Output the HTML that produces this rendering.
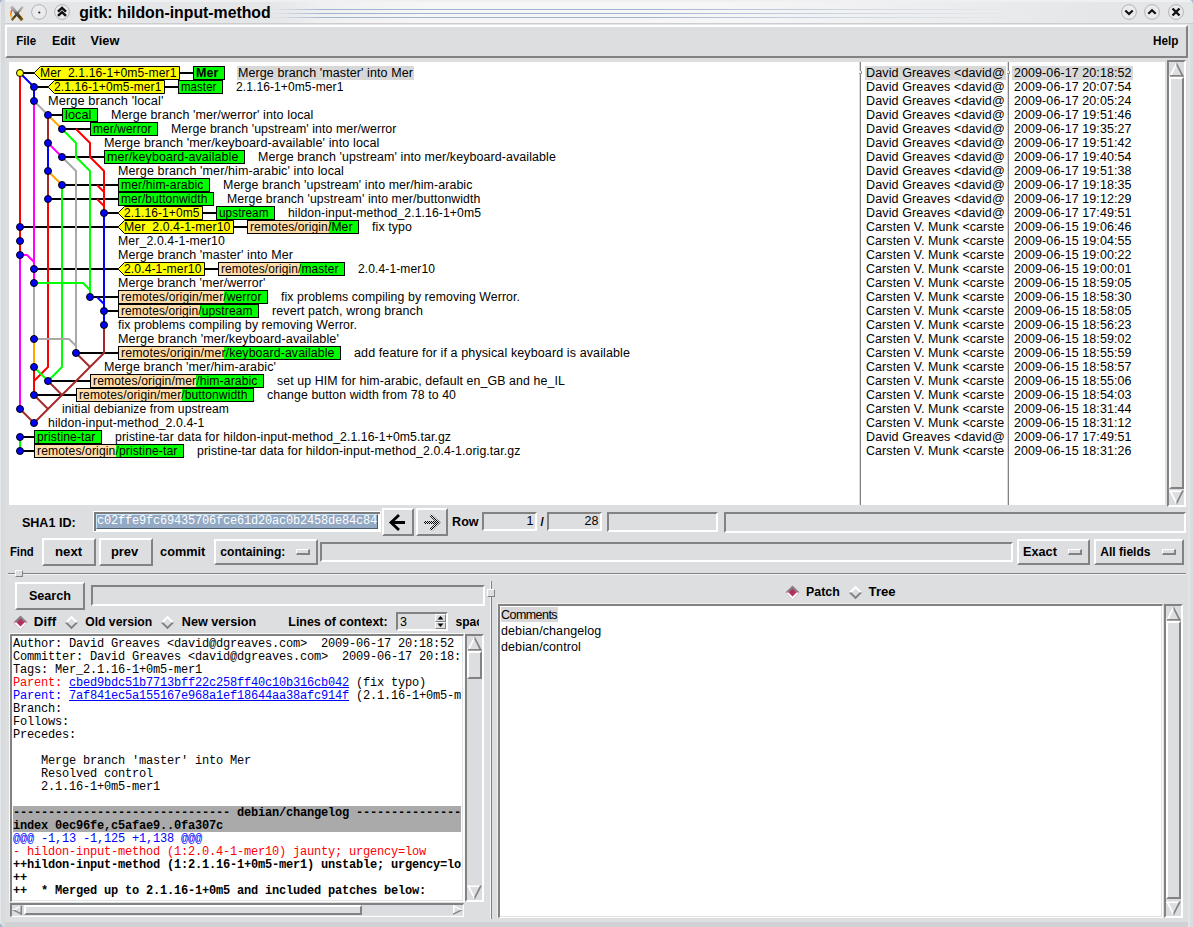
<!DOCTYPE html>
<html><head><meta charset="utf-8"><title>gitk: hildon-input-method</title>
<style>
html,body{margin:0;padding:0}
body{width:1193px;height:927px;overflow:hidden;background:#dddee0;position:relative;font-family:"Liberation Sans",sans-serif}
.rs{position:absolute;box-sizing:border-box;border:2px solid;border-color:#ffffff #828282 #828282 #ffffff;background:#dddee0}
.sk{position:absolute;box-sizing:border-box;border:2px solid;border-width:2px 1px 1px 2px;border-color:#828282 #ffffff #ffffff #828282;background:#dddee0}
.sk2{position:absolute;box-sizing:border-box;border:2px solid;border-color:#828282 #ffffff #ffffff #828282;background:#dddee0}
.sk::after{content:"";position:absolute;left:0;top:0;right:0;bottom:0;border-right:1px solid #e2e3e5;border-bottom:1px solid #e2e3e5;pointer-events:none}
.lb{position:absolute;font:bold 12px "Liberation Sans",sans-serif;color:#000;white-space:pre;line-height:14px}
.lbs{font:bold 12px "Liberation Sans",sans-serif;fill:#000;white-space:pre}
.lt{font:12.5px "Liberation Sans",sans-serif;letter-spacing:0.1px;fill:#000;white-space:pre}
.lt.b{font-weight:bold}
.lt2{font:12.5px "Liberation Sans",sans-serif;letter-spacing:0.1px;color:#000;white-space:pre;line-height:14px}
.lrow{position:absolute;font:12.5px "Liberation Sans",sans-serif;letter-spacing:0.1px;color:#000;white-space:pre;line-height:14px;height:14px}
.mono{font:12px "Liberation Mono",monospace;letter-spacing:-0.2px;white-space:pre}
.dl{font:12px "Liberation Mono",monospace;letter-spacing:-0.2px;white-space:pre;height:13px;line-height:15px;color:#000}
.dl.fs{background:#aaaaaa;font-weight:bold}
.dl.hk{color:#00f}
.dl.d0{color:#f00}
.dl.b{font-weight:bold}
.lk{color:#00f;text-decoration:underline}
</style></head>
<body>
<div style="position:absolute;left:0;top:0;width:1193px;height:25px;background:#e5e6e8"></div>
<div style="position:absolute;left:0;top:0;width:1193px;height:2px;background:#eff0f2"></div>
<div style="position:absolute;left:272px;top:2px;width:830px;height:21px;background:linear-gradient(to right,rgba(246,246,247,0),rgba(246,246,247,.6) 6%,rgba(246,246,247,1) 18%,rgba(246,246,247,1) 55%,rgba(246,246,247,0))"></div>
<div style="position:absolute;left:272px;top:9px;width:830px;height:1px;background:linear-gradient(to right,rgba(160,180,208,0),rgba(160,180,208,1) 6%,rgba(160,180,208,1) 45%,rgba(160,180,208,0) 90%)"></div>
<div style="position:absolute;left:272px;top:13px;width:830px;height:1px;background:linear-gradient(to right,rgba(160,180,208,0),rgba(160,180,208,1) 6%,rgba(160,180,208,1) 45%,rgba(160,180,208,0) 90%)"></div>
<div style="position:absolute;left:272px;top:17px;width:830px;height:1px;background:linear-gradient(to right,rgba(160,180,208,0),rgba(160,180,208,1) 6%,rgba(160,180,208,1) 45%,rgba(160,180,208,0) 90%)"></div>
<div style="position:absolute;left:0;top:23px;width:1193px;height:1px;background:#cdcdd0"></div>
<svg style="position:absolute;left:70px;top:0;overflow:visible" width="220" height="24"><text x="9.2" y="18" style="font:bold 16.5px 'Liberation Sans',sans-serif" fill="#000" lengthAdjust="spacingAndGlyphs" textLength="191.5">gitk: hildon-input-method</text></svg>
<svg style="position:absolute;left:8px;top:4px" width="18" height="18" viewBox="8 4 18 18"><defs><linearGradient id="xg" x1="0" y1="6" x2="0" y2="21" gradientUnits="userSpaceOnUse"><stop offset="0" stop-color="#c2c2c2"/><stop offset=".35" stop-color="#8e8e8e"/><stop offset=".5" stop-color="#4a4a48"/><stop offset=".7" stop-color="#4a3812"/><stop offset="1" stop-color="#8e6e16"/></linearGradient><linearGradient id="og" x1="0" y1="9" x2="0" y2="19" gradientUnits="userSpaceOnUse"><stop offset="0" stop-color="#ff4a20"/><stop offset=".5" stop-color="#ff8a08"/><stop offset="1" stop-color="#ffe030"/></linearGradient></defs><path d="M12.6 9.2 Q9.2 13.5 12.4 18.6" stroke="url(#og)" stroke-width="1.7" fill="none"/><path d="M21.8 9.5 Q24.6 13.5 22.2 18" stroke="#ffd9a0" stroke-width="1" fill="none" opacity=".7"/><path d="M11.3 6.5 L22.2 20.3" stroke="url(#xg)" stroke-width="3.2"/><path d="M22.8 6.6 L11.8 20.3" stroke="url(#xg)" stroke-width="2.2"/></svg>
<svg style="position:absolute;left:30px;top:3px" width="18" height="18"><circle cx="9" cy="9" r="7.4" fill="#ebebed" stroke="#b4b4b8" stroke-width="1"/><circle cx="9.3" cy="9.5" r="1.1" fill="#222"/></svg>
<svg style="position:absolute;left:53px;top:3px" width="18" height="18"><circle cx="9" cy="9" r="7.4" fill="#ebebed" stroke="#b4b4b8" stroke-width="1"/><path d="M5 8.6 L9 4.9 L13 8.6 M5 12.9 L9 9.2 L13 12.9" stroke="#111" stroke-width="2.5" fill="none"/></svg>
<svg style="position:absolute;left:1120px;top:3px" width="18" height="18"><circle cx="9" cy="9" r="7.4" fill="#ebebed" stroke="#b4b4b8" stroke-width="1"/><path d="M5.3 7.5 L9 11 L12.7 7.5" stroke="#111" stroke-width="2.2" fill="none"/></svg>
<svg style="position:absolute;left:1143px;top:3px" width="18" height="18"><circle cx="9" cy="9" r="7.4" fill="#ebebed" stroke="#b4b4b8" stroke-width="1"/><path d="M5.3 10.8 L9 7.3 L12.7 10.8" stroke="#111" stroke-width="2.2" fill="none"/></svg>
<svg style="position:absolute;left:1167px;top:3px" width="18" height="18"><circle cx="9" cy="9" r="7.4" fill="#ebebed" stroke="#b4b4b8" stroke-width="1"/><path d="M5.5 5.5 L12.5 12.5 M12.5 5.5 L5.5 12.5" stroke="#111" stroke-width="2.4" fill="none"/></svg>
<div style="position:absolute;left:0;top:922px;width:1193px;height:5px;background:#d0d2d5"></div>
<div style="position:absolute;left:0;top:0;width:5px;height:927px;background:#d8dadc"></div>
<div style="position:absolute;left:0;top:0;width:1px;height:927px;background:#e4e8ec"></div>
<svg style="position:absolute;left:0;top:922px" width="5" height="5"><path d="M0 5 V1 Q1 4 4 5 Z" fill="#9fb4cc"/></svg>
<svg style="position:absolute;left:1188px;top:922px" width="5" height="5"><path d="M5 5 V1 Q4 4 1 5 Z" fill="#9fb4cc"/></svg>
<div style="position:absolute;left:1188px;top:24px;width:2px;height:903px;background:#e2e4e6"></div>
<div style="position:absolute;left:1190px;top:24px;width:3px;height:903px;background:#dadcdf"></div>
<svg style="position:absolute;left:0;top:0" width="4" height="5"><path d="M0 0 H3 Q0.5 0.5 0 4 Z" fill="#9fb4cc"/></svg>
<svg style="position:absolute;left:1189px;top:0" width="4" height="5"><path d="M4 0 H1 Q3.5 0.5 4 4 Z" fill="#9fb4cc"/></svg>
<div class="rs" style="left:5px;top:25px;width:1183px;height:33px;"></div>
<svg style="position:absolute;left:14px;top:31px;overflow:visible" width="27" height="20"><text x="2.30" y="14.00" class="lbs" lengthAdjust="spacingAndGlyphs" textLength="19.7">File</text></svg>
<svg style="position:absolute;left:50px;top:31px;overflow:visible" width="31" height="20"><text x="2.10" y="14.00" class="lbs" lengthAdjust="spacingAndGlyphs" textLength="23.2">Edit</text></svg>
<svg style="position:absolute;left:88px;top:31px;overflow:visible" width="36" height="20"><text x="2.50" y="14.00" class="lbs" lengthAdjust="spacingAndGlyphs" textLength="28.9">View</text></svg>
<svg style="position:absolute;left:1151px;top:31px;overflow:visible" width="33" height="20"><text x="2.10" y="14.00" class="lbs" lengthAdjust="spacingAndGlyphs" textLength="25.4">Help</text></svg>
<div style="position:absolute;left:9px;top:62px;width:1156px;height:443px;background:#fff;overflow:hidden"><svg style="position:absolute;left:-9px;top:-62px" width="1165" height="520" viewBox="0 0 1165 520"><rect x="237" y="66" width="177" height="14" fill="#d8d8d8"/>
<rect x="865" y="66" width="141" height="14" fill="#d8d8d8"/>
<rect x="1012" y="66" width="121" height="14" fill="#d8d8d8"/>
<line x1="20" y1="73" x2="193" y2="73" stroke="#000" stroke-width="2"/>
<line x1="34" y1="87" x2="178" y2="87" stroke="#000" stroke-width="2"/>
<line x1="48" y1="115" x2="62" y2="115" stroke="#000" stroke-width="2"/>
<line x1="62" y1="129" x2="90" y2="129" stroke="#000" stroke-width="2"/>
<line x1="62" y1="157" x2="104" y2="157" stroke="#000" stroke-width="2"/>
<line x1="62" y1="185" x2="118" y2="185" stroke="#000" stroke-width="2"/>
<line x1="48" y1="199" x2="118" y2="199" stroke="#000" stroke-width="2"/>
<line x1="104" y1="213" x2="216" y2="213" stroke="#000" stroke-width="2"/>
<line x1="20" y1="227" x2="247" y2="227" stroke="#000" stroke-width="2"/>
<line x1="34" y1="269" x2="218" y2="269" stroke="#000" stroke-width="2"/>
<line x1="90" y1="297" x2="118" y2="297" stroke="#000" stroke-width="2"/>
<line x1="104" y1="311" x2="118" y2="311" stroke="#000" stroke-width="2"/>
<line x1="76" y1="353" x2="118" y2="353" stroke="#000" stroke-width="2"/>
<line x1="48" y1="381" x2="90" y2="381" stroke="#000" stroke-width="2"/>
<line x1="34" y1="395" x2="76" y2="395" stroke="#000" stroke-width="2"/>
<line x1="20" y1="437" x2="34" y2="437" stroke="#000" stroke-width="2"/>
<line x1="20" y1="451" x2="34" y2="451" stroke="#000" stroke-width="2"/>
<polyline points="20.0,73.0 20.0,255.0" fill="none" stroke="#ff0000" stroke-width="2" stroke-linejoin="round" stroke-linecap="butt"/>
<polyline points="20.0,73.0 34.0,87.0 34.0,101.0" fill="none" stroke="#0000ff" stroke-width="2" stroke-linejoin="round" stroke-linecap="butt"/>
<polyline points="34.0,101.0 34.0,283.0" fill="none" stroke="#ff00ff" stroke-width="2" stroke-linejoin="round" stroke-linecap="butt"/>
<polyline points="34.0,101.0 48.0,115.0" fill="none" stroke="#a9a9a9" stroke-width="2" stroke-linejoin="round" stroke-linecap="butt"/>
<polyline points="48.0,115.0 48.0,143.0" fill="none" stroke="#a52a2a" stroke-width="2" stroke-linejoin="round" stroke-linecap="butt"/>
<polyline points="48.0,115.0 62.0,129.0" fill="none" stroke="#ffa500" stroke-width="2" stroke-linejoin="round" stroke-linecap="butt"/>
<polyline points="62.0,129.0 76.0,143.0 76.0,157.0 90.0,171.0 90.0,297.0" fill="none" stroke="#00ff00" stroke-width="2" stroke-linejoin="round" stroke-linecap="butt"/>
<polyline points="76.0,129.0 90.0,143.0 90.0,157.0 104.0,171.0 104.0,213.0" fill="none" stroke="#ff0000" stroke-width="2" stroke-linejoin="round" stroke-linecap="butt"/>
<polyline points="48.0,143.0 48.0,171.0" fill="none" stroke="#0000ff" stroke-width="2" stroke-linejoin="round" stroke-linecap="butt"/>
<polyline points="48.0,143.0 62.0,157.0" fill="none" stroke="#ff00ff" stroke-width="2" stroke-linejoin="round" stroke-linecap="butt"/>
<polyline points="62.0,157.0 76.0,171.0 76.0,353.0" fill="none" stroke="#a9a9a9" stroke-width="2" stroke-linejoin="round" stroke-linecap="butt"/>
<polyline points="48.0,171.0 48.0,199.0" fill="none" stroke="#a52a2a" stroke-width="2" stroke-linejoin="round" stroke-linecap="butt"/>
<polyline points="48.0,171.0 62.0,185.0" fill="none" stroke="#ffa500" stroke-width="2" stroke-linejoin="round" stroke-linecap="butt"/>
<polyline points="62.0,185.0 62.0,367.0 48.0,381.0" fill="none" stroke="#00ff00" stroke-width="2" stroke-linejoin="round" stroke-linecap="butt"/>
<polyline points="97.0,185.0 104.0,192.0" fill="none" stroke="#ff0000" stroke-width="2" stroke-linejoin="round" stroke-linecap="butt"/>
<polyline points="97.0,199.0 104.0,206.0" fill="none" stroke="#ff0000" stroke-width="2" stroke-linejoin="round" stroke-linecap="butt"/>
<polyline points="48.0,199.0 48.0,367.0 34.0,381.0" fill="none" stroke="#ff0000" stroke-width="2" stroke-linejoin="round" stroke-linecap="butt"/>
<polyline points="104.0,213.0 104.0,325.0" fill="none" stroke="#0000ff" stroke-width="2" stroke-linejoin="round" stroke-linecap="butt"/>
<polyline points="20.0,255.0 20.0,409.0" fill="none" stroke="#ff00ff" stroke-width="2" stroke-linejoin="round" stroke-linecap="butt"/>
<polyline points="20.0,255.0 27.0,255.0 34.0,262.0" fill="none" stroke="#ff00ff" stroke-width="2" stroke-linejoin="round" stroke-linecap="butt"/>
<polyline points="34.0,283.0 34.0,339.0" fill="none" stroke="#a9a9a9" stroke-width="2" stroke-linejoin="round" stroke-linecap="butt"/>
<polyline points="34.0,283.0 83.0,283.0 90.0,290.0" fill="none" stroke="#00ff00" stroke-width="2" stroke-linejoin="round" stroke-linecap="butt"/>
<polyline points="97.0,297.0 104.0,304.0" fill="none" stroke="#0000ff" stroke-width="2" stroke-linejoin="round" stroke-linecap="butt"/>
<polyline points="104.0,325.0 104.0,353.0 34.0,423.0" fill="none" stroke="#a52a2a" stroke-width="2" stroke-linejoin="round" stroke-linecap="butt"/>
<polyline points="34.0,339.0 69.0,339.0 76.0,346.0" fill="none" stroke="#a9a9a9" stroke-width="2" stroke-linejoin="round" stroke-linecap="butt"/>
<polyline points="34.0,339.0 34.0,367.0" fill="none" stroke="#ffa500" stroke-width="2" stroke-linejoin="round" stroke-linecap="butt"/>
<polyline points="76.0,353.0 90.0,367.0" fill="none" stroke="#a52a2a" stroke-width="2" stroke-linejoin="round" stroke-linecap="butt"/>
<polyline points="34.0,367.0 48.0,381.0" fill="none" stroke="#00ff00" stroke-width="2" stroke-linejoin="round" stroke-linecap="butt"/>
<polyline points="34.0,367.0 34.0,395.0" fill="none" stroke="#ff0000" stroke-width="2" stroke-linejoin="round" stroke-linecap="butt"/>
<polyline points="48.0,381.0 62.0,395.0" fill="none" stroke="#a52a2a" stroke-width="2" stroke-linejoin="round" stroke-linecap="butt"/>
<polyline points="34.0,395.0 48.0,409.0" fill="none" stroke="#a52a2a" stroke-width="2" stroke-linejoin="round" stroke-linecap="butt"/>
<polyline points="20.0,409.0 34.0,423.0" fill="none" stroke="#a52a2a" stroke-width="2" stroke-linejoin="round" stroke-linecap="butt"/>
<polyline points="20.0,437.0 20.0,451.0" fill="none" stroke="#00ff00" stroke-width="2" stroke-linejoin="round" stroke-linecap="butt"/>
<polygon points="34.5,72.5 40.5,66.5 179.5,66.5 179.5,79.5 40.5,79.5 34.5,73.5" fill="#ffff00" stroke="#000" stroke-width="1"/>
<text x="40" y="77" class="lt" lengthAdjust="spacingAndGlyphs" textLength="136.5">Mer_2.1.16-1+0m5-mer1</text>
<rect x="193.5" y="66.5" width="31" height="13" fill="#00ff00" stroke="#000" stroke-width="1"/>
<text x="196" y="77" class="lt b" lengthAdjust="spacingAndGlyphs" textLength="22.5">Mer</text>
<text x="238" y="77" class="lt" lengthAdjust="spacingAndGlyphs" textLength="175">Merge branch 'master' into Mer</text>
<polygon points="48.5,86.5 54.5,80.5 164.5,80.5 164.5,93.5 54.5,93.5 48.5,87.5" fill="#ffff00" stroke="#000" stroke-width="1"/>
<text x="54" y="91" class="lt" lengthAdjust="spacingAndGlyphs" textLength="107.5">2.1.16-1+0m5-mer1</text>
<rect x="178.5" y="80.5" width="44" height="13" fill="#00ff00" stroke="#000" stroke-width="1"/>
<text x="181" y="91" class="lt" lengthAdjust="spacingAndGlyphs" textLength="35.5">master</text>
<text x="236" y="91" class="lt" lengthAdjust="spacingAndGlyphs" textLength="107.5">2.1.16-1+0m5-mer1</text>
<text x="48" y="105" class="lt" lengthAdjust="spacingAndGlyphs" textLength="115.5">Merge branch 'local'</text>
<rect x="62.5" y="108.5" width="35" height="13" fill="#00ff00" stroke="#000" stroke-width="1"/>
<text x="65" y="119" class="lt" lengthAdjust="spacingAndGlyphs" textLength="26.5">local</text>
<text x="111" y="119" class="lt" lengthAdjust="spacingAndGlyphs" textLength="202.5">Merge branch 'mer/werror' into local</text>
<rect x="90.5" y="122.5" width="67" height="13" fill="#00ff00" stroke="#000" stroke-width="1"/>
<text x="93" y="133" class="lt" lengthAdjust="spacingAndGlyphs" textLength="58.5">mer/werror</text>
<text x="171" y="133" class="lt" lengthAdjust="spacingAndGlyphs" textLength="225.5">Merge branch 'upstream' into mer/werror</text>
<text x="104" y="147" class="lt" lengthAdjust="spacingAndGlyphs" textLength="275.5">Merge branch 'mer/keyboard-available' into local</text>
<rect x="104.5" y="150.5" width="140" height="13" fill="#00ff00" stroke="#000" stroke-width="1"/>
<text x="107" y="161" class="lt" lengthAdjust="spacingAndGlyphs" textLength="131.5">mer/keyboard-available</text>
<text x="258" y="161" class="lt" lengthAdjust="spacingAndGlyphs" textLength="298">Merge branch 'upstream' into mer/keyboard-available</text>
<text x="118" y="175" class="lt" lengthAdjust="spacingAndGlyphs" textLength="226">Merge branch 'mer/him-arabic' into local</text>
<rect x="118.5" y="178.5" width="91" height="13" fill="#00ff00" stroke="#000" stroke-width="1"/>
<text x="121" y="189" class="lt" lengthAdjust="spacingAndGlyphs" textLength="82.5">mer/him-arabic</text>
<text x="223" y="189" class="lt" lengthAdjust="spacingAndGlyphs" textLength="249.5">Merge branch 'upstream' into mer/him-arabic</text>
<rect x="118.5" y="192.5" width="95" height="13" fill="#00ff00" stroke="#000" stroke-width="1"/>
<text x="121" y="203" class="lt" lengthAdjust="spacingAndGlyphs" textLength="86.5">mer/buttonwidth</text>
<text x="227" y="203" class="lt" lengthAdjust="spacingAndGlyphs" textLength="253.5">Merge branch 'upstream' into mer/buttonwidth</text>
<polygon points="118.5,212.5 124.5,206.5 202.5,206.5 202.5,219.5 124.5,219.5 118.5,213.5" fill="#ffff00" stroke="#000" stroke-width="1"/>
<text x="124" y="217" class="lt" lengthAdjust="spacingAndGlyphs" textLength="75.5">2.1.16-1+0m5</text>
<rect x="216.5" y="206.5" width="58" height="13" fill="#00ff00" stroke="#000" stroke-width="1"/>
<text x="219" y="217" class="lt" lengthAdjust="spacingAndGlyphs" textLength="49.5">upstream</text>
<text x="288" y="217" class="lt" lengthAdjust="spacingAndGlyphs" textLength="193">hildon-input-method_2.1.16-1+0m5</text>
<polygon points="118.5,226.5 124.5,220.5 233.5,220.5 233.5,233.5 124.5,233.5 118.5,227.5" fill="#ffff00" stroke="#000" stroke-width="1"/>
<text x="124" y="231" class="lt" lengthAdjust="spacingAndGlyphs" textLength="106.5">Mer_2.0.4-1-mer10</text>
<rect x="247.5" y="220.5" width="111" height="13" fill="#00ff00" stroke="#000" stroke-width="1"/>
<rect x="248" y="221.0" width="81" height="12" fill="#ffddaa"/>
<text x="250" y="231" class="lt" lengthAdjust="spacingAndGlyphs" textLength="102.5">remotes/origin/Mer</text>
<text x="372" y="231" class="lt" lengthAdjust="spacingAndGlyphs" textLength="40">fix typo</text>
<text x="118" y="245" class="lt" lengthAdjust="spacingAndGlyphs" textLength="107">Mer_2.0.4-1-mer10</text>
<text x="118" y="259" class="lt" lengthAdjust="spacingAndGlyphs" textLength="175">Merge branch 'master' into Mer</text>
<polygon points="118.5,268.5 124.5,262.5 204.5,262.5 204.5,275.5 124.5,275.5 118.5,269.5" fill="#ffff00" stroke="#000" stroke-width="1"/>
<text x="124" y="273" class="lt" lengthAdjust="spacingAndGlyphs" textLength="77.5">2.0.4-1-mer10</text>
<rect x="218.5" y="262.5" width="126" height="13" fill="#00ff00" stroke="#000" stroke-width="1"/>
<rect x="219" y="263.0" width="81" height="12" fill="#ffddaa"/>
<text x="221" y="273" class="lt" lengthAdjust="spacingAndGlyphs" textLength="117.5">remotes/origin/master</text>
<text x="358" y="273" class="lt" lengthAdjust="spacingAndGlyphs" textLength="77">2.0.4-1-mer10</text>
<text x="118" y="287" class="lt" lengthAdjust="spacingAndGlyphs" textLength="147.5">Merge branch 'mer/werror'</text>
<rect x="118.5" y="290.5" width="149" height="13" fill="#00ff00" stroke="#000" stroke-width="1"/>
<rect x="119" y="291.0" width="105" height="12" fill="#ffddaa"/>
<text x="121" y="301" class="lt" lengthAdjust="spacingAndGlyphs" textLength="140.5">remotes/origin/mer/werror</text>
<text x="281" y="301" class="lt" lengthAdjust="spacingAndGlyphs" textLength="239">fix problems compiling by removing Werror.</text>
<rect x="118.5" y="304.5" width="140" height="13" fill="#00ff00" stroke="#000" stroke-width="1"/>
<rect x="119" y="305.0" width="81" height="12" fill="#ffddaa"/>
<text x="121" y="315" class="lt" lengthAdjust="spacingAndGlyphs" textLength="131.5">remotes/origin/upstream</text>
<text x="272" y="315" class="lt" lengthAdjust="spacingAndGlyphs" textLength="151">revert patch, wrong branch</text>
<text x="118" y="329" class="lt" lengthAdjust="spacingAndGlyphs" textLength="239">fix problems compiling by removing Werror.</text>
<text x="118" y="343" class="lt" lengthAdjust="spacingAndGlyphs" textLength="221">Merge branch 'mer/keyboard-available'</text>
<rect x="118.5" y="346.5" width="222" height="13" fill="#00ff00" stroke="#000" stroke-width="1"/>
<rect x="119" y="347.0" width="105" height="12" fill="#ffddaa"/>
<text x="121" y="357" class="lt" lengthAdjust="spacingAndGlyphs" textLength="213.5">remotes/origin/mer/keyboard-available</text>
<text x="354" y="357" class="lt" lengthAdjust="spacingAndGlyphs" textLength="276">add feature for if a physical keyboard is available</text>
<text x="104" y="371" class="lt" lengthAdjust="spacingAndGlyphs" textLength="172">Merge branch 'mer/him-arabic'</text>
<rect x="90.5" y="374.5" width="173" height="13" fill="#00ff00" stroke="#000" stroke-width="1"/>
<rect x="91" y="375.0" width="105" height="12" fill="#ffddaa"/>
<text x="93" y="385" class="lt" lengthAdjust="spacingAndGlyphs" textLength="164.5">remotes/origin/mer/him-arabic</text>
<text x="277" y="385" class="lt" lengthAdjust="spacingAndGlyphs" textLength="288">set up HIM for him-arabic, default en_GB and he_IL</text>
<rect x="76.5" y="388.5" width="177" height="13" fill="#00ff00" stroke="#000" stroke-width="1"/>
<rect x="77" y="389.0" width="105" height="12" fill="#ffddaa"/>
<text x="79" y="399" class="lt" lengthAdjust="spacingAndGlyphs" textLength="168.5">remotes/origin/mer/buttonwidth</text>
<text x="267" y="399" class="lt" lengthAdjust="spacingAndGlyphs" textLength="189">change button width from 78 to 40</text>
<text x="62" y="413" class="lt" lengthAdjust="spacingAndGlyphs" textLength="167">initial debianize from upstream</text>
<text x="48" y="427" class="lt" lengthAdjust="spacingAndGlyphs" textLength="156.5">hildon-input-method_2.0.4-1</text>
<rect x="34.5" y="430.5" width="67" height="13" fill="#00ff00" stroke="#000" stroke-width="1"/>
<text x="37" y="441" class="lt" lengthAdjust="spacingAndGlyphs" textLength="58.5">pristine-tar</text>
<text x="115" y="441" class="lt" lengthAdjust="spacingAndGlyphs" textLength="336">pristine-tar data for hildon-input-method_2.1.16-1+0m5.tar.gz</text>
<rect x="34.5" y="444.5" width="149" height="13" fill="#00ff00" stroke="#000" stroke-width="1"/>
<rect x="35" y="445.0" width="81" height="12" fill="#ffddaa"/>
<text x="37" y="455" class="lt" lengthAdjust="spacingAndGlyphs" textLength="140.5">remotes/origin/pristine-tar</text>
<text x="197" y="455" class="lt" lengthAdjust="spacingAndGlyphs" textLength="323.5">pristine-tar data for hildon-input-method_2.0.4-1.orig.tar.gz</text>
<circle cx="20" cy="73" r="3.5" fill="#ffff00" stroke="#000" stroke-width="1"/>
<circle cx="34" cy="87" r="3.5" fill="#0000ff" stroke="#000" stroke-width="1"/>
<circle cx="34" cy="101" r="3.5" fill="#0000ff" stroke="#000" stroke-width="1"/>
<circle cx="48" cy="115" r="3.5" fill="#0000ff" stroke="#000" stroke-width="1"/>
<circle cx="62" cy="129" r="3.5" fill="#0000ff" stroke="#000" stroke-width="1"/>
<circle cx="48" cy="143" r="3.5" fill="#0000ff" stroke="#000" stroke-width="1"/>
<circle cx="62" cy="157" r="3.5" fill="#0000ff" stroke="#000" stroke-width="1"/>
<circle cx="48" cy="171" r="3.5" fill="#0000ff" stroke="#000" stroke-width="1"/>
<circle cx="62" cy="185" r="3.5" fill="#0000ff" stroke="#000" stroke-width="1"/>
<circle cx="48" cy="199" r="3.5" fill="#0000ff" stroke="#000" stroke-width="1"/>
<circle cx="104" cy="213" r="3.5" fill="#0000ff" stroke="#000" stroke-width="1"/>
<circle cx="20" cy="227" r="3.5" fill="#0000ff" stroke="#000" stroke-width="1"/>
<circle cx="20" cy="241" r="3.5" fill="#0000ff" stroke="#000" stroke-width="1"/>
<circle cx="20" cy="255" r="3.5" fill="#0000ff" stroke="#000" stroke-width="1"/>
<circle cx="34" cy="269" r="3.5" fill="#0000ff" stroke="#000" stroke-width="1"/>
<circle cx="34" cy="283" r="3.5" fill="#0000ff" stroke="#000" stroke-width="1"/>
<circle cx="90" cy="297" r="3.5" fill="#0000ff" stroke="#000" stroke-width="1"/>
<circle cx="104" cy="311" r="3.5" fill="#0000ff" stroke="#000" stroke-width="1"/>
<circle cx="104" cy="325" r="3.5" fill="#0000ff" stroke="#000" stroke-width="1"/>
<circle cx="34" cy="339" r="3.5" fill="#0000ff" stroke="#000" stroke-width="1"/>
<circle cx="76" cy="353" r="3.5" fill="#0000ff" stroke="#000" stroke-width="1"/>
<circle cx="34" cy="367" r="3.5" fill="#0000ff" stroke="#000" stroke-width="1"/>
<circle cx="48" cy="381" r="3.5" fill="#0000ff" stroke="#000" stroke-width="1"/>
<circle cx="34" cy="395" r="3.5" fill="#0000ff" stroke="#000" stroke-width="1"/>
<circle cx="20" cy="409" r="3.5" fill="#0000ff" stroke="#000" stroke-width="1"/>
<circle cx="34" cy="423" r="3.5" fill="#0000ff" stroke="#000" stroke-width="1"/>
<circle cx="20" cy="437" r="3.5" fill="#0000ff" stroke="#000" stroke-width="1"/>
<circle cx="20" cy="451" r="3.5" fill="#0000ff" stroke="#000" stroke-width="1"/>
<text x="866" y="77" class="lt" lengthAdjust="spacingAndGlyphs" textLength="138.8">David Greaves &lt;david@</text>
<text x="1014" y="77" class="lt" lengthAdjust="spacingAndGlyphs" textLength="117.6">2009-06-17 20:18:52</text>
<text x="866" y="91" class="lt" lengthAdjust="spacingAndGlyphs" textLength="138.8">David Greaves &lt;david@</text>
<text x="1014" y="91" class="lt" lengthAdjust="spacingAndGlyphs" textLength="117.6">2009-06-17 20:07:54</text>
<text x="866" y="105" class="lt" lengthAdjust="spacingAndGlyphs" textLength="138.8">David Greaves &lt;david@</text>
<text x="1014" y="105" class="lt" lengthAdjust="spacingAndGlyphs" textLength="117.6">2009-06-17 20:05:24</text>
<text x="866" y="119" class="lt" lengthAdjust="spacingAndGlyphs" textLength="138.8">David Greaves &lt;david@</text>
<text x="1014" y="119" class="lt" lengthAdjust="spacingAndGlyphs" textLength="117.6">2009-06-17 19:51:46</text>
<text x="866" y="133" class="lt" lengthAdjust="spacingAndGlyphs" textLength="138.8">David Greaves &lt;david@</text>
<text x="1014" y="133" class="lt" lengthAdjust="spacingAndGlyphs" textLength="117.6">2009-06-17 19:35:27</text>
<text x="866" y="147" class="lt" lengthAdjust="spacingAndGlyphs" textLength="138.8">David Greaves &lt;david@</text>
<text x="1014" y="147" class="lt" lengthAdjust="spacingAndGlyphs" textLength="117.6">2009-06-17 19:51:42</text>
<text x="866" y="161" class="lt" lengthAdjust="spacingAndGlyphs" textLength="138.8">David Greaves &lt;david@</text>
<text x="1014" y="161" class="lt" lengthAdjust="spacingAndGlyphs" textLength="117.6">2009-06-17 19:40:54</text>
<text x="866" y="175" class="lt" lengthAdjust="spacingAndGlyphs" textLength="138.8">David Greaves &lt;david@</text>
<text x="1014" y="175" class="lt" lengthAdjust="spacingAndGlyphs" textLength="117.6">2009-06-17 19:51:38</text>
<text x="866" y="189" class="lt" lengthAdjust="spacingAndGlyphs" textLength="138.8">David Greaves &lt;david@</text>
<text x="1014" y="189" class="lt" lengthAdjust="spacingAndGlyphs" textLength="117.6">2009-06-17 19:18:35</text>
<text x="866" y="203" class="lt" lengthAdjust="spacingAndGlyphs" textLength="138.8">David Greaves &lt;david@</text>
<text x="1014" y="203" class="lt" lengthAdjust="spacingAndGlyphs" textLength="117.6">2009-06-17 19:12:29</text>
<text x="866" y="217" class="lt" lengthAdjust="spacingAndGlyphs" textLength="138.8">David Greaves &lt;david@</text>
<text x="1014" y="217" class="lt" lengthAdjust="spacingAndGlyphs" textLength="117.6">2009-06-17 17:49:51</text>
<text x="866" y="231" class="lt" lengthAdjust="spacingAndGlyphs" textLength="138.2">Carsten V. Munk &lt;carste</text>
<text x="1014" y="231" class="lt" lengthAdjust="spacingAndGlyphs" textLength="117.6">2009-06-15 19:06:46</text>
<text x="866" y="245" class="lt" lengthAdjust="spacingAndGlyphs" textLength="138.2">Carsten V. Munk &lt;carste</text>
<text x="1014" y="245" class="lt" lengthAdjust="spacingAndGlyphs" textLength="117.6">2009-06-15 19:04:55</text>
<text x="866" y="259" class="lt" lengthAdjust="spacingAndGlyphs" textLength="138.2">Carsten V. Munk &lt;carste</text>
<text x="1014" y="259" class="lt" lengthAdjust="spacingAndGlyphs" textLength="117.6">2009-06-15 19:00:22</text>
<text x="866" y="273" class="lt" lengthAdjust="spacingAndGlyphs" textLength="138.2">Carsten V. Munk &lt;carste</text>
<text x="1014" y="273" class="lt" lengthAdjust="spacingAndGlyphs" textLength="117.6">2009-06-15 19:00:01</text>
<text x="866" y="287" class="lt" lengthAdjust="spacingAndGlyphs" textLength="138.2">Carsten V. Munk &lt;carste</text>
<text x="1014" y="287" class="lt" lengthAdjust="spacingAndGlyphs" textLength="117.6">2009-06-15 18:59:05</text>
<text x="866" y="301" class="lt" lengthAdjust="spacingAndGlyphs" textLength="138.2">Carsten V. Munk &lt;carste</text>
<text x="1014" y="301" class="lt" lengthAdjust="spacingAndGlyphs" textLength="117.6">2009-06-15 18:58:30</text>
<text x="866" y="315" class="lt" lengthAdjust="spacingAndGlyphs" textLength="138.2">Carsten V. Munk &lt;carste</text>
<text x="1014" y="315" class="lt" lengthAdjust="spacingAndGlyphs" textLength="117.6">2009-06-15 18:58:05</text>
<text x="866" y="329" class="lt" lengthAdjust="spacingAndGlyphs" textLength="138.2">Carsten V. Munk &lt;carste</text>
<text x="1014" y="329" class="lt" lengthAdjust="spacingAndGlyphs" textLength="117.6">2009-06-15 18:56:23</text>
<text x="866" y="343" class="lt" lengthAdjust="spacingAndGlyphs" textLength="138.2">Carsten V. Munk &lt;carste</text>
<text x="1014" y="343" class="lt" lengthAdjust="spacingAndGlyphs" textLength="117.6">2009-06-15 18:59:02</text>
<text x="866" y="357" class="lt" lengthAdjust="spacingAndGlyphs" textLength="138.2">Carsten V. Munk &lt;carste</text>
<text x="1014" y="357" class="lt" lengthAdjust="spacingAndGlyphs" textLength="117.6">2009-06-15 18:55:59</text>
<text x="866" y="371" class="lt" lengthAdjust="spacingAndGlyphs" textLength="138.2">Carsten V. Munk &lt;carste</text>
<text x="1014" y="371" class="lt" lengthAdjust="spacingAndGlyphs" textLength="117.6">2009-06-15 18:58:57</text>
<text x="866" y="385" class="lt" lengthAdjust="spacingAndGlyphs" textLength="138.2">Carsten V. Munk &lt;carste</text>
<text x="1014" y="385" class="lt" lengthAdjust="spacingAndGlyphs" textLength="117.6">2009-06-15 18:55:06</text>
<text x="866" y="399" class="lt" lengthAdjust="spacingAndGlyphs" textLength="138.2">Carsten V. Munk &lt;carste</text>
<text x="1014" y="399" class="lt" lengthAdjust="spacingAndGlyphs" textLength="117.6">2009-06-15 18:54:03</text>
<text x="866" y="413" class="lt" lengthAdjust="spacingAndGlyphs" textLength="138.2">Carsten V. Munk &lt;carste</text>
<text x="1014" y="413" class="lt" lengthAdjust="spacingAndGlyphs" textLength="117.6">2009-06-15 18:31:44</text>
<text x="866" y="427" class="lt" lengthAdjust="spacingAndGlyphs" textLength="138.2">Carsten V. Munk &lt;carste</text>
<text x="1014" y="427" class="lt" lengthAdjust="spacingAndGlyphs" textLength="117.6">2009-06-15 18:31:12</text>
<text x="866" y="441" class="lt" lengthAdjust="spacingAndGlyphs" textLength="138.8">David Greaves &lt;david@</text>
<text x="1014" y="441" class="lt" lengthAdjust="spacingAndGlyphs" textLength="117.6">2009-06-17 17:49:51</text>
<text x="866" y="455" class="lt" lengthAdjust="spacingAndGlyphs" textLength="138.2">Carsten V. Munk &lt;carste</text>
<text x="1014" y="455" class="lt" lengthAdjust="spacingAndGlyphs" textLength="117.6">2009-06-15 18:31:26</text></svg><div style="position:absolute;left:850px;top:0;width:1px;height:443px;background:#d9d9d9"></div><div style="position:absolute;left:851px;top:0;width:1px;height:443px;background:#828282"></div><div style="position:absolute;left:998px;top:0;width:1px;height:443px;background:#d9d9d9"></div><div style="position:absolute;left:999px;top:0;width:1px;height:443px;background:#828282"></div><div style="position:absolute;left:850px;top:9px;width:2px;height:2px;background:#f0f0f0;border:1px solid #999;border-width:0 1px 1px 0"></div><div style="position:absolute;left:998px;top:9px;width:2px;height:2px;background:#f0f0f0;border:1px solid #999;border-width:0 1px 1px 0"></div></div>
<div class="sk2" style="left:1167px;top:60px;width:19px;height:447px;background:#dbdcdf"></div><svg style="position:absolute;left:1169px;top:62px" width="15" height="15"><polygon points="7.5,0 15,14.5 0,14.5" fill="#dddee0"/><polygon points="7.5,0 0,14.5 2,14.5 7.5,3.5" fill="#fff"/><polygon points="7.5,0 15,14.5 13,14.5 7.5,3.5" fill="#828282"/><rect x="1" y="13" width="13.5" height="1.6" fill="#828282"/></svg><svg style="position:absolute;left:1169px;top:490px" width="15" height="15"><polygon points="0,0.5 15,0.5 7.5,15" fill="#dddee0"/><rect x="0.5" y="0.5" width="14" height="1.6" fill="#fff"/><polygon points="0,0.5 7.5,15 7.5,11.5 2,0.5" fill="#fff"/><polygon points="15,0.5 7.5,15 7.5,11.5 13,0.5" fill="#828282"/></svg><div class="rs" style="left:1169px;top:77px;width:15px;height:412px"></div>
<svg style="position:absolute;left:19px;top:513px;overflow:visible" width="61" height="20"><text x="2.90" y="14.00" class="lbs" lengthAdjust="spacingAndGlyphs" textLength="53.8">SHA1 ID:</text></svg>
<div style="position:absolute;left:93px;top:511px;width:288px;height:21px;background:#fff"></div>
<div style="position:absolute;left:94px;top:512px;width:286px;height:2px;background:#7c7c7c"></div>
<div style="position:absolute;left:94px;top:512px;width:2px;height:19px;background:#7c7c7c"></div>
<div style="position:absolute;left:96px;top:514px;width:282px;height:15px;background:#93a9c4;box-sizing:border-box;border:1px solid;border-color:#c8e6fb #4d5d70 #4d5d70 #c8e6fb"></div>
<div class="mono" style="position:absolute;left:97px;top:513px;color:#fff;line-height:16px">c02ffe9fc69435706fce61d20ac0b2458de84c84</div>
<div class="rs" style="left:382px;top:508px;width:32px;height:28px;"><svg width="28" height="24" style="position:absolute;left:0;top:0"><path d="M7.5 12.5 H21" stroke="#000" stroke-width="3" fill="none"/><path d="M15 5 L7 12.5 L15 20" stroke="#000" stroke-width="2.8" fill="none" stroke-linejoin="miter"/></svg></div>
<div class="rs" style="left:416px;top:508px;width:32px;height:28px;"><svg width="28" height="24" style="position:absolute;left:0;top:0"><defs><pattern id="stp" width="2" height="2" patternUnits="userSpaceOnUse"><rect x="0" y="0" width="1" height="1" fill="#000"/><rect x="1" y="1" width="1" height="1" fill="#000"/></pattern></defs><path d="M6 12.5 H20" stroke="url(#stp)" stroke-width="3" fill="none"/><path d="M12.5 5 L20.5 12.5 L12.5 20" stroke="url(#stp)" stroke-width="2.8" fill="none"/></svg></div>
<svg style="position:absolute;left:450px;top:512px;overflow:visible" width="34" height="20"><text x="2.10" y="14.00" class="lbs" lengthAdjust="spacingAndGlyphs" textLength="26.5">Row</text></svg>
<div class="sk2" style="left:482px;top:512px;width:55px;height:19px;"><div class="lt2" style="position:absolute;right:1.5px;top:0px">1</div></div>
<div class="lb" style="left:540.5px;top:515px;">/</div>
<div class="sk2" style="left:547px;top:512px;width:55px;height:19px;"><div class="lt2" style="position:absolute;right:1.5px;top:0px">28</div></div>
<div class="sk2" style="left:607px;top:512px;width:111px;height:20px;"></div>
<div class="sk2" style="left:724px;top:512px;width:462px;height:21px;"></div>
<svg style="position:absolute;left:7px;top:542px;overflow:visible" width="31" height="20"><text x="2.90" y="14.00" class="lbs" lengthAdjust="spacingAndGlyphs" textLength="23.8">Find</text></svg>
<div class="rs" style="left:42px;top:538px;width:54px;height:28px;"></div>
<svg style="position:absolute;left:53px;top:542px;overflow:visible" width="35" height="20"><text x="2.00" y="14.00" class="lbs" lengthAdjust="spacingAndGlyphs" textLength="27.2">next</text></svg>
<div class="rs" style="left:99px;top:538px;width:54px;height:28px;"></div>
<svg style="position:absolute;left:108px;top:542px;overflow:visible" width="35" height="20"><text x="2.90" y="14.00" class="lbs" lengthAdjust="spacingAndGlyphs" textLength="27.4">prev</text></svg>
<svg style="position:absolute;left:158px;top:542px;overflow:visible" width="53" height="20"><text x="2.10" y="14.00" class="lbs" lengthAdjust="spacingAndGlyphs" textLength="45.2">commit</text></svg>
<div class="rs" style="left:214px;top:539px;width:104px;height:26px;"><div class="lb" style="left:5px;top:3px"></div><div class="rs" style="left:80px;top:8px;width:14px;height:6px;border-width:1px 2px 2px 1px"></div></div>
<svg style="position:absolute;left:218px;top:542px;overflow:visible" width="73" height="20"><text x="2.30" y="14.00" class="lbs" lengthAdjust="spacingAndGlyphs" textLength="65.1">containing:</text></svg>
<div class="sk2" style="left:320px;top:542px;width:693px;height:20px;"></div>
<div class="rs" style="left:1017px;top:539px;width:73px;height:26px;"><div class="lb" style="left:5px;top:3px"></div><div class="rs" style="left:49px;top:8px;width:14px;height:6px;border-width:1px 2px 2px 1px"></div></div>
<svg style="position:absolute;left:1021px;top:542px;overflow:visible" width="41" height="20"><text x="2.10" y="14.00" class="lbs" lengthAdjust="spacingAndGlyphs" textLength="33.8">Exact</text></svg>
<div class="rs" style="left:1094px;top:539px;width:90px;height:26px;"><div class="lb" style="left:5px;top:3px"></div><div class="rs" style="left:66px;top:8px;width:14px;height:6px;border-width:1px 2px 2px 1px"></div></div>
<svg style="position:absolute;left:1098px;top:542px;overflow:visible" width="58" height="20"><text x="2.30" y="14.00" class="lbs" lengthAdjust="spacingAndGlyphs" textLength="50.2">All fields</text></svg>
<div style="position:absolute;left:8px;top:573px;width:1178px;height:1px;background:#828282"></div>
<div style="position:absolute;left:8px;top:574px;width:1178px;height:1px;background:#f4f4f4"></div>
<div class="rs" style="left:15px;top:570px;width:8px;height:7px;border-width:1px"></div>
<div class="rs" style="left:15px;top:582px;width:70px;height:28px;"></div>
<svg style="position:absolute;left:26px;top:586px;overflow:visible" width="50" height="20"><text x="2.90" y="14.00" class="lbs" lengthAdjust="spacingAndGlyphs" textLength="42.0">Search</text></svg>
<div class="sk2" style="left:91px;top:585px;width:394px;height:21px;"></div>
<svg style="position:absolute;left:12.5px;top:615.0px" width="15" height="15"><polygon points="7.5,0.7 14.3,7.5 7.5,14.3 0.7,7.5" fill="#b03060"/><polygon points="0.7,7.5 7.5,0.7 14.3,7.5 11.5,7.5 7.5,3.5 3.5,7.5" fill="#828282"/><polygon points="0.7,7.5 7.5,14.3 14.3,7.5 11.5,7.5 7.5,11.5 3.5,7.5" fill="#fff"/></svg>
<svg style="position:absolute;left:31px;top:611px;overflow:visible" width="30" height="20"><text x="2.80" y="14.50" class="lbs" lengthAdjust="spacingAndGlyphs" textLength="22.3">Diff</text></svg>
<svg style="position:absolute;left:63.5px;top:615.0px" width="15" height="15"><polygon points="7.5,0.7 14.3,7.5 7.5,14.3 0.7,7.5" fill="#dddee0"/><polygon points="0.7,7.5 7.5,0.7 14.3,7.5 11.5,7.5 7.5,3.5 3.5,7.5" fill="#fff"/><polygon points="0.7,7.5 7.5,14.3 14.3,7.5 11.5,7.5 7.5,11.5 3.5,7.5" fill="#828282"/></svg>
<svg style="position:absolute;left:83px;top:611px;overflow:visible" width="74" height="20"><text x="2.20" y="14.50" class="lbs" lengthAdjust="spacingAndGlyphs" textLength="67.0">Old version</text></svg>
<svg style="position:absolute;left:160.0px;top:615.0px" width="15" height="15"><polygon points="7.5,0.7 14.3,7.5 7.5,14.3 0.7,7.5" fill="#dddee0"/><polygon points="0.7,7.5 7.5,0.7 14.3,7.5 11.5,7.5 7.5,3.5 3.5,7.5" fill="#fff"/><polygon points="0.7,7.5 7.5,14.3 14.3,7.5 11.5,7.5 7.5,11.5 3.5,7.5" fill="#828282"/></svg>
<svg style="position:absolute;left:179px;top:611px;overflow:visible" width="82" height="20"><text x="2.80" y="14.50" class="lbs" lengthAdjust="spacingAndGlyphs" textLength="74.3">New version</text></svg>
<svg style="position:absolute;left:286px;top:611px;overflow:visible" width="107" height="20"><text x="2.30" y="14.50" class="lbs" lengthAdjust="spacingAndGlyphs" textLength="99.3">Lines of context:</text></svg>
<div class="sk2" style="left:396px;top:612px;width:52px;height:19px;"><div class="lt2" style="position:absolute;left:2px;top:1px">3</div><div class="rs" style="left:37px;top:0;width:11px;height:8px;border-width:1px"></div><div class="rs" style="left:37px;top:8px;width:11px;height:7px;border-width:1px"></div><svg style="position:absolute;left:37px;top:0" width="11" height="15"><polygon points="5.5,2 8.5,5.5 2.5,5.5" fill="#000"/><polygon points="2.5,9.5 8.5,9.5 5.5,13" fill="#000"/></svg></div>
<div style="position:absolute;left:455px;top:614px;width:24px;height:16px;overflow:hidden"><div class="lb" style="left:.5px;top:.5px">space</div></div>
<div style="position:absolute;left:9px;top:633px;width:456px;height:269px;background:#fafafa"></div>
<div class="sk" style="left:10px;top:634px;width:454px;height:268px;background:#fff;overflow:hidden"><div style="position:absolute;left:1px;top:1px;width:448px;height:263px;overflow:hidden"><div class="dl ">Author: David Greaves &lt;david@dgreaves.com&gt;  2009-06-17 20:18:52</div>
<div class="dl ">Committer: David Greaves &lt;david@dgreaves.com&gt;  2009-06-17 20:18:52</div>
<div class="dl ">Tags: Mer_2.1.16-1+0m5-mer1</div>
<div class="dl "><span style="color:#f00">Parent: </span><span class="lk">cbed9bdc51b7713bff22c258ff40c10b316cb042</span> (fix typo)</div>
<div class="dl "><span style="color:#00f">Parent: </span><span class="lk">7af841ec5a155167e968a1ef18644aa38afc914f</span> (2.1.16-1+0m5-mer1)</div>
<div class="dl ">Branch: </div>
<div class="dl ">Follows: </div>
<div class="dl ">Precedes: </div>
<div class="dl ">&nbsp;</div>
<div class="dl ">    Merge branch 'master' into Mer</div>
<div class="dl ">    Resolved control</div>
<div class="dl ">    2.1.16-1+0m5-mer1</div>
<div class="dl ">&nbsp;</div>
<div class="dl fs">------------------------------- debian/changelog -------------------------------</div>
<div class="dl fs">index 0ec96fe,c5afae9..0fa307c</div>
<div class="dl hk">@@@ -1,13 -1,125 +1,138 @@@</div>
<div class="dl d0">- hildon-input-method (1:2.0.4-1-mer10) jaunty; urgency=low</div>
<div class="dl b">++hildon-input-method (1:2.1.16-1+0m5-mer1) unstable; urgency=low</div>
<div class="dl b">++</div>
<div class="dl b">++  * Merged up to 2.1.16-1+0m5 and included patches below:</div></div></div>
<div class="sk2" style="left:465px;top:634px;width:19px;height:268px;background:#dbdcdf"></div><svg style="position:absolute;left:467px;top:636px" width="15" height="15"><polygon points="7.5,0 15,14.5 0,14.5" fill="#dddee0"/><polygon points="7.5,0 0,14.5 2,14.5 7.5,3.5" fill="#fff"/><polygon points="7.5,0 15,14.5 13,14.5 7.5,3.5" fill="#828282"/><rect x="1" y="13" width="13.5" height="1.6" fill="#828282"/></svg><svg style="position:absolute;left:467px;top:885px" width="15" height="15"><polygon points="0,0.5 15,0.5 7.5,15" fill="#dddee0"/><rect x="0.5" y="0.5" width="14" height="1.6" fill="#fff"/><polygon points="0,0.5 7.5,15 7.5,11.5 2,0.5" fill="#fff"/><polygon points="15,0.5 7.5,15 7.5,11.5 13,0.5" fill="#828282"/></svg><div class="rs" style="left:467px;top:651px;width:15px;height:28px"></div>
<div class="sk" style="left:10px;top:903px;width:454px;height:14px;background:#dbdcdf"><div class="rs" style="left:12px;top:0px;width:338px;height:10px;border-width:2px 2px 2px 2px"></div><svg style="position:absolute;left:0;top:0" width="12" height="10"><polygon points="0,5 10,0 10,10" fill="#dddee0"/><polygon points="0,5 10,0 10,1.6 2.5,5" fill="#fff"/><polygon points="0,5 10,10 10,8.4 3,5" fill="#828282"/><rect x="8.5" y="0.5" width="1.6" height="9.5" fill="#828282"/></svg><svg style="position:absolute;right:0;top:0" width="12" height="10"><polygon points="12,5 2,0 2,10" fill="#dddee0"/><polygon points="12,5 2,0 2,1.6 9.5,5" fill="#fff"/><rect x="2" y="0" width="1.6" height="10" fill="#fff"/><polygon points="12,5 2,10 2,8.4 9,5" fill="#828282"/></svg></div>
<div style="position:absolute;left:490px;top:581px;width:1px;height:338px;background:#f4f4f4"></div>
<div style="position:absolute;left:491px;top:581px;width:1px;height:338px;background:#828282"></div>
<div class="rs" style="left:487px;top:589px;width:8px;height:8px;border-width:1px"></div>
<svg style="position:absolute;left:784.5px;top:585.0px" width="15" height="15"><polygon points="7.5,0.7 14.3,7.5 7.5,14.3 0.7,7.5" fill="#b03060"/><polygon points="0.7,7.5 7.5,0.7 14.3,7.5 11.5,7.5 7.5,3.5 3.5,7.5" fill="#828282"/><polygon points="0.7,7.5 7.5,14.3 14.3,7.5 11.5,7.5 7.5,11.5 3.5,7.5" fill="#fff"/></svg>
<svg style="position:absolute;left:804px;top:581px;overflow:visible" width="41" height="20"><text x="2.00" y="14.70" class="lbs" lengthAdjust="spacingAndGlyphs" textLength="33.7">Patch</text></svg>
<svg style="position:absolute;left:847.5px;top:585.0px" width="15" height="15"><polygon points="7.5,0.7 14.3,7.5 7.5,14.3 0.7,7.5" fill="#dddee0"/><polygon points="0.7,7.5 7.5,0.7 14.3,7.5 11.5,7.5 7.5,3.5 3.5,7.5" fill="#fff"/><polygon points="0.7,7.5 7.5,14.3 14.3,7.5 11.5,7.5 7.5,11.5 3.5,7.5" fill="#828282"/></svg>
<svg style="position:absolute;left:866px;top:581px;overflow:visible" width="35" height="20"><text x="2.60" y="14.70" class="lbs" lengthAdjust="spacingAndGlyphs" textLength="27.0">Tree</text></svg>
<div style="position:absolute;left:497px;top:603px;width:666px;height:315px;background:#eee"></div>
<div class="sk" style="left:498px;top:604px;width:665px;height:314px;background:#fff"><div style="position:absolute;left:1px;top:1px;width:57px;height:15px;background:#d8d8d8"></div><div class="lt2" style="position:absolute;left:1px;top:1px;line-height:16px"><span style="letter-spacing:-0.55px">Comments</span><br>debian/changelog<br>debian/control</div></div>
<div class="sk2" style="left:1164px;top:604px;width:19px;height:314px;background:#dbdcdf"></div><svg style="position:absolute;left:1166px;top:606px" width="15" height="15"><polygon points="7.5,0 15,14.5 0,14.5" fill="#dddee0"/><polygon points="7.5,0 0,14.5 2,14.5 7.5,3.5" fill="#fff"/><polygon points="7.5,0 15,14.5 13,14.5 7.5,3.5" fill="#828282"/><rect x="1" y="13" width="13.5" height="1.6" fill="#828282"/></svg><svg style="position:absolute;left:1166px;top:901px" width="15" height="15"><polygon points="0,0.5 15,0.5 7.5,15" fill="#dddee0"/><rect x="0.5" y="0.5" width="14" height="1.6" fill="#fff"/><polygon points="0,0.5 7.5,15 7.5,11.5 2,0.5" fill="#fff"/><polygon points="15,0.5 7.5,15 7.5,11.5 13,0.5" fill="#828282"/></svg><div class="rs" style="left:1166px;top:621px;width:15px;height:278px"></div>
</body></html>
